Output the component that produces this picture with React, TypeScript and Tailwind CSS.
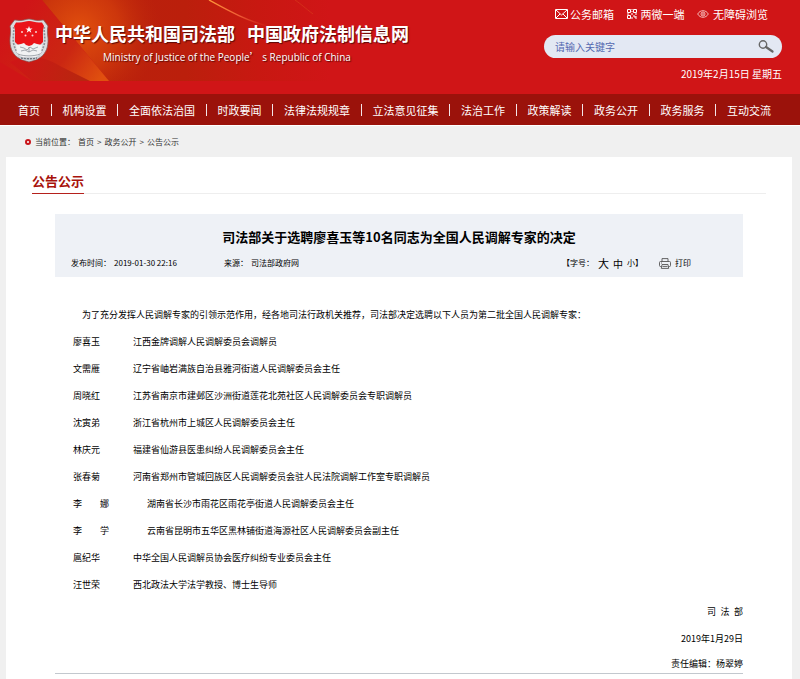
import { FormEvent, useState } from "react";

type Person = { name: string; title: string; indent?: boolean };

const navItems = [
  "首页",
  "机构设置",
  "全面依法治国",
  "时政要闻",
  "法律法规规章",
  "立法意见征集",
  "法治工作",
  "政策解读",
  "政务公开",
  "政务服务",
  "互动交流",
];

const people: Person[] = [
  { name: "廖喜玉", title: "江西金牌调解人民调解委员会调解员" },
  { name: "文需雁", title: "辽宁省岫岩满族自治县雅河街道人民调解委员会主任" },
  { name: "周晓红", title: "江苏省南京市建邺区沙洲街道莲花北苑社区人民调解委员会专职调解员" },
  { name: "沈寅弟", title: "浙江省杭州市上城区人民调解委员会主任" },
  { name: "林庆元", title: "福建省仙游县医患纠纷人民调解委员会主任" },
  { name: "张春菊", title: "河南省郑州市管城回族区人民调解委员会驻人民法院调解工作室专职调解员" },
  { name: "李　　娜", title: "湖南省长沙市雨花区雨花亭街道人民调解委员会主任", indent: true },
  { name: "李　　学", title: "云南省昆明市五华区黑林铺街道海源社区人民调解委员会副主任", indent: true },
  { name: "扈纪华", title: "中华全国人民调解员协会医疗纠纷专业委员会主任" },
  { name: "汪世荣", title: "西北政法大学法学教授、博士生导师" },
];

const Emblem = () => (
  <svg viewBox="0 0 40 45" className="h-[45px] w-10 shrink-0" aria-hidden="true">
    <path
      d="M20 1c3 0 5 1.500 9 1.500 2 0 4-.5 5.500-.5L39 8c-1 4-.5 8 0 12 .5 9-2 15-7 19-4 3-8 3.500-12 5-4-1.500-8-2-12-5-5-4-7.500-10-7-19 .5-4 1-8 0-12l4.500-6c1.500 0 3.500.5 5.500.5C15 2.500 17 1 20 1z"
      fill="#d9dce0"
      stroke="#8b5a58"
      strokeWidth=".8"
    />
    <path d="M4.500 9c1 4-1 10 0 16 1 5 3 9 6 12M35.500 9c-1 4 1 10 0 16-1 5-3 9-6 12" fill="none" stroke="#8d9298" strokeWidth="1.600" strokeDasharray="2 1.200" />
    <path
      d="M20 3c3 0 6 1.500 10 1.500h3L35 8c-2 6-.5 11-1 16l-4 4H10l-4-4c-.5-5 1-10-1-16l2-3.500h3C14 4.500 17 3 20 3z"
      fill="#ea1319"
    />
    <path d="M20 8l.9 2.500h2.700l-2.200 1.600.9 2.600-2.300-1.600-2.300 1.600.9-2.600-2.200-1.600h2.700z" fill="#fff" />
    <g fill="#f6d5d0">
      <circle cx="13" cy="14" r="1" />
      <circle cx="16.500" cy="17.500" r="1" />
      <circle cx="23.500" cy="17.500" r="1" />
      <circle cx="27" cy="14" r="1" />
    </g>
    <path d="M7 27l5-1 3-1 2 2 3 1 3-1 2-2 3 1 5 1-1 8-5 4H13l-5-4z" fill="#f1f2f3" />
    <path d="M11 29l4 1 3 2 3-3 3 2 5-2M12 33l4-1 4 2 4-2 4 1M20 29v5M9 36c6 2.500 16 2.500 22 0" fill="none" stroke="#8d939a" strokeWidth=".8" />
    <path d="M9 38c6 2 16 2 22 0l-2.500 3c-5 2-12 2-17 0z" fill="#c6cad0" />
    <path d="M12 40c5 1 11 1 16 0" fill="none" stroke="#6f767e" strokeWidth="1.300" strokeDasharray="2 1" />
  </svg>
);

const BannerArt = () => (
  <svg
    viewBox="0 0 330 81"
    preserveAspectRatio="none"
    className="absolute left-0 top-0 h-[81px] w-[330px]"
    aria-hidden="true"
  >
    <defs>
      <linearGradient id="base" x1="0" x2="1" y1="0" y2="0">
        <stop offset="0" stopColor="#b8220c" />
        <stop offset=".5" stopColor="#bb1f0c" />
        <stop offset=".75" stopColor="#c81811" />
        <stop offset="1" stopColor="#d01517" />
      </linearGradient>
      <radialGradient id="glow" gradientUnits="userSpaceOnUse" cx="80" cy="30" r="80">
        <stop offset="0" stopColor="#e2500e" />
        <stop offset=".5" stopColor="#d5400c" stopOpacity=".7" />
        <stop offset="1" stopColor="#c02a0a" stopOpacity="0" />
      </radialGradient>
      <linearGradient id="edge" gradientUnits="userSpaceOnUse" x1="15" x2="100" y1="20" y2="80">
        <stop offset="0" stopColor="#d01517" />
        <stop offset=".6" stopColor="#cb2712" />
        <stop offset="1" stopColor="#e0500f" />
      </linearGradient>
      <linearGradient id="fold" gradientUnits="userSpaceOnUse" x1="10" x2="80" y1="60" y2="80">
        <stop offset="0" stopColor="#d01517" />
        <stop offset="1" stopColor="#b9260f" />
      </linearGradient>
      <linearGradient id="arc" x1="0" x2="1" y1="0" y2="0">
        <stop offset="0" stopColor="#ff9a3a" />
        <stop offset=".5" stopColor="#ee5a35" />
        <stop offset="1" stopColor="#e0301c" stopOpacity="0" />
      </linearGradient>
    </defs>
    <path d="M42 0h288v81H109z" fill="url(#base)" />
    <path d="M42 0h288v81H109z" fill="url(#glow)" />
    <path d="M0 0h42l67 81H32L0 62z" fill="url(#edge)" />
    <path d="M10 62c20-8 35-5 50 4l30 15H32z" fill="url(#fold)" />
    <path d="M209 0c20 11 38 21 62 27" fill="none" stroke="url(#arc)" strokeWidth="1.400" />
    <path d="M295 0c6 4 10 8 18 14" fill="none" stroke="#d8401c" strokeWidth="1" opacity=".6" />
  </svg>
);

const MailIcon = () => (
  <svg viewBox="0 0 13 10" className="h-[10px] w-[13px]" fill="none" stroke="#fff" aria-hidden="true">
    <path d="M.5.5h12v9H.5zM1 1l5.500 5L12 1M1 9l4-4M12 9L8 5" strokeWidth="1" />
  </svg>
);

const QrIcon = () => (
  <svg viewBox="0 0 10 10" className="h-[10px] w-[10px]" fill="none" stroke="#fff" aria-hidden="true">
    <path d="M.5.5h3v3h-3zM6.500.5h3v3h-3zM.5 6.500h3v3h-3z" />
    <path d="M5 0v1M5 2v1M4 5h2M0 5h2M8 5h2M6 7h2v2M9 7v3M5 8v2" />
  </svg>
);

const EyeIcon = () => (
  <svg viewBox="0 0 12 8" className="h-2 w-3" fill="none" stroke="#f6c9c6" strokeWidth=".9" aria-hidden="true">
    <path d="M.7 4C3-.4 9-.4 11.300 4 9 8.400 3 8.400.7 4z" />
    <circle cx="6" cy="4" r="2" />
    <circle cx="6" cy="4" r=".5" />
  </svg>
);

const PrintIcon = () => (
  <svg viewBox="0 0 12 11" className="h-[11px] w-3" fill="none" stroke="#555" strokeWidth=".9" aria-hidden="true">
    <path d="M3 3.500V.6h6v2.900M2.500 8.500h-1a1 1 0 0 1-1-1v-3a1 1 0 0 1 1-1h9a1 1 0 0 1 1 1v3a1 1 0 0 1-1 1h-1" />
    <path d="M3 6.500h6l.7 3.900H2.300zM3.500 8.400h5M2 5h1" />
  </svg>
);

const Header = () => {
  const [keyword, setKeyword] = useState("");

  const submitHandler = (e: FormEvent) => {
    e.preventDefault();
  };

  return (
    <header className="relative bg-[#d01517] text-white">
      <BannerArt />
      <div className="relative flex h-[94px] justify-between pl-[9px] pr-[18px]">
        <div className="flex items-start gap-[6px] pt-[18px]">
          <Emblem />
          <div className="pt-[3px]">
            <h1 className="flex gap-3 whitespace-nowrap text-[18px] font-bold leading-6 [text-shadow:1px_1px_1px_#5a0a08]">
              <span>中华人民共和国司法部</span>
              <span>中国政府法制信息网</span>
            </h1>
            <p className="whitespace-nowrap pl-12 font-['Open_Sans',sans-serif] text-[10px] leading-6 [text-shadow:1px_1px_1px_#5a0a08]">
              Ministry of Justice of the People
              <span className="font-['Noto_Sans_CJK_SC',sans-serif]">’</span> s Republic of China
            </p>
          </div>
        </div>
        <div className="flex w-[238px] flex-col items-end pt-[6px]">
          <div className="flex w-full justify-between pl-[11px] pr-[14px] text-[11px] leading-4">
            <a href="#mail" className="flex items-center gap-[2px]">
              <MailIcon />
              公务邮箱
            </a>
            <a href="#media" className="flex items-center gap-1">
              <QrIcon />
              两微一端
            </a>
            <a href="#access" className="flex items-center gap-1">
              <EyeIcon />
              无障碍浏览
            </a>
          </div>
          <form
            onSubmit={submitHandler}
            className="mt-[13px] flex h-[23px] w-full items-center rounded-full bg-[#e3e8f3] pl-[11px] pr-2"
          >
            <input
              type="text"
              aria-label="搜索"
              placeholder="请输入关键字"
              value={keyword}
              onChange={(e) => setKeyword(e.target.value)}
              className="min-w-0 flex-1 bg-transparent text-[10px] text-[#222] outline-none placeholder:text-[#5369b0]"
            />
            <button type="submit" aria-label="搜索按钮">
              <svg viewBox="0 0 16 13" className="h-[13px] w-4" fill="none" stroke="#666" aria-hidden="true">
                <circle cx="5" cy="4.500" r="3.700" strokeWidth="1.400" />
                <path d="M8 7l6.500 4.500" strokeWidth="2.200" strokeLinecap="round" />
              </svg>
            </button>
          </form>
          <p className="mt-2 text-[10px] leading-4">2019年2月15日 星期五</p>
        </div>
      </div>
    </header>
  );
};

const Nav = () => (
  <nav className="border-b border-white bg-[#9b120b] text-white">
    <ul className="flex h-[31px] items-center justify-between pl-[18px] pr-[29px] text-[11px] leading-4">
      {navItems.map((item, i) => (
        <li key={item} className="contents">
          {i > 0 && <span className="h-3 w-px bg-[#f3e6ea]" />}
          <a href="#nav" className="whitespace-nowrap">
            {item}
          </a>
        </li>
      ))}
    </ul>
  </nav>
);

const Breadcrumb = () => (
  <div className="flex h-[31px] items-center gap-[3px] pl-[25px] text-[8px] leading-4 text-[#333]">
    <span className="mr-px size-[6px] rounded-full border-2 border-[#c9151b] bg-white" />
    <span>当前位置：</span>
    <a href="#home">首页</a>
    <span>&gt;</span>
    <a href="#open">政务公开</a>
    <span>&gt;</span>
    <a href="#notice">公告公示</a>
  </div>
);

const Article = () => (
  <article className="mx-[49px] mt-5 border-b border-[#c3c8ce]">
    <div className="bg-[#eef1f6] pt-[11px]">
      <h3 className="text-center text-[13px] font-bold leading-6">
        司法部关于选聘廖喜玉等10名同志为全国人民调解专家的决定
      </h3>
      <div className="flex h-7 items-center pl-4 pr-[52px] text-[8px]">
        <p className="flex w-[153px] gap-[3px]">
          <span>发布时间：</span>
          <span>2019-01-30 22:16</span>
        </p>
        <p className="flex gap-[3px]">
          <span>来源：</span>
          <span>司法部政府网</span>
        </p>
        <div className="ml-auto flex items-center gap-1">
          <span>【字号：</span>
          <button type="button" className="text-[11px]">
            大
          </button>
          <button type="button" className="text-[10px]">
            中
          </button>
          <span>
            <button type="button">小</button>】
          </span>
        </div>
        <button type="button" className="ml-4 flex items-center gap-1">
          <PrintIcon />
          打印
        </button>
      </div>
    </div>
    <div className="pt-6 text-[9px] leading-[27px]">
      <p className="pl-[27px]">
        为了充分发挥人民调解专家的引领示范作用，经各地司法行政机关推荐，司法部决定选聘以下人员为第二批全国人民调解专家：
      </p>
      <ul className="pl-[18px]">
        {people.map((person) => (
          <li key={person.name} className="flex">
            <span className="w-[60px] shrink-0">{person.name}</span>
            <span className={person.indent ? "pl-[14px]" : ""}>{person.title}</span>
          </li>
        ))}
      </ul>
      <div className="text-right">
        <p>司&ensp;法&ensp;部</p>
        <p>2019年1月29日</p>
        <p className="pt-[3px] leading-[18px]">责任编辑：杨翠婷</p>
      </div>
    </div>
  </article>
);

const App = () => {
  return (
    <div className="min-h-screen bg-[#f0f0f0] font-['Noto_Sans_CJK_SC',sans-serif] text-black" lang="zh-CN">
      <Header />
      <Nav />
      <Breadcrumb />
      <main className="ml-[6px] mr-2 bg-white pb-[6px] pt-3">
        <div className="mx-[26px] flex border-b border-[#eee]">
          <h2 className="-mb-px border-b border-[#b5201c] text-[13px] font-bold leading-6 text-[#a8130c]">
            公告公示
          </h2>
        </div>
        <Article />
      </main>
    </div>
  );
};

export default App;
